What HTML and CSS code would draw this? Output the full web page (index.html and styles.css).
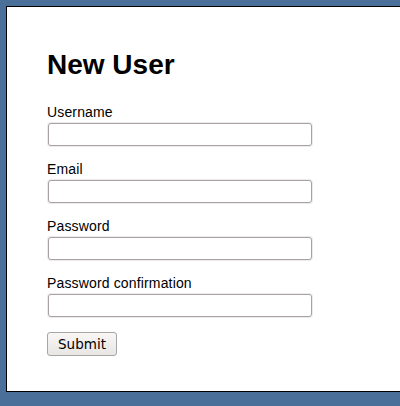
FILE: index.html
```html
<!DOCTYPE html>
<html>
<head>
<meta charset="utf-8">
<link rel="stylesheet" href="styles.css">
</head>
<body>
<div class="panel">
  <h1 class="title">New User</h1>
  <form class="form">
    <div class="field">
      <label class="label" for="u">Username</label>
      <input class="input" id="u" type="text">
    </div>
    <div class="field">
      <label class="label" for="e">Email</label>
      <input class="input" id="e" type="text">
    </div>
    <div class="field">
      <label class="label" for="p">Password</label>
      <input class="input" id="p" type="password">
    </div>
    <div class="field">
      <label class="label" for="pc">Password confirmation</label>
      <input class="input" id="pc" type="password">
    </div>
    <div class="actions">
      <button class="button" type="button">Submit</button>
    </div>
  </form>
</div>
</body>
</html>
```
FILE: styles.css
```css
html, body {
  margin: 0;
  padding: 0;
}
body {
  background: #4a7099;
  font-family: "Liberation Sans", Arial, sans-serif;
  font-size: 14px;
  color: #000;
  padding: 6px 0 0 6px;
  overflow: hidden;
}
.panel {
  background: #fff;
  border: 1px solid #000;
  border-right: none;
  padding: 42px 0 34px 40px;
  height: 308px;
}
.title {
  margin: 0 0 23px 0;
  font-size: 28px;
  line-height: 32px;
  font-weight: bold;
}
.form {
  margin: 0;
  display: flex;
  flex-direction: column;
  gap: 14px;
}
.field {
  display: flex;
  flex-direction: column;
  align-items: flex-start;
  gap: 2px;
}
.label {
  display: block;
  font-size: 14px;
  line-height: 16px;
  letter-spacing: 0.15px;
}
.input {
  box-sizing: border-box;
  width: 264px;
  height: 23px;
  margin: 1px;
  padding: 0 3px;
  border: 1px solid #aaa2a2;
  border-radius: 3px;
  box-shadow: 0 0 0 1px #ececec;
  background: #fff;
  font-family: "DejaVu Sans", sans-serif;
  font-size: 13px;
  outline: none;
}
.actions {
  display: flex;
}
.button {
  box-sizing: border-box;
  width: 70px;
  height: 24px;
  margin: 0;
  padding: 0;
  border: 1px solid #a6a6a6;
  border-radius: 3px;
  background: linear-gradient(#f8f7f6, #e8e6e4);
  font-family: "DejaVu Sans", sans-serif;
  font-size: 13.5px;
  color: #000;
  line-height: 22px;
}
```
